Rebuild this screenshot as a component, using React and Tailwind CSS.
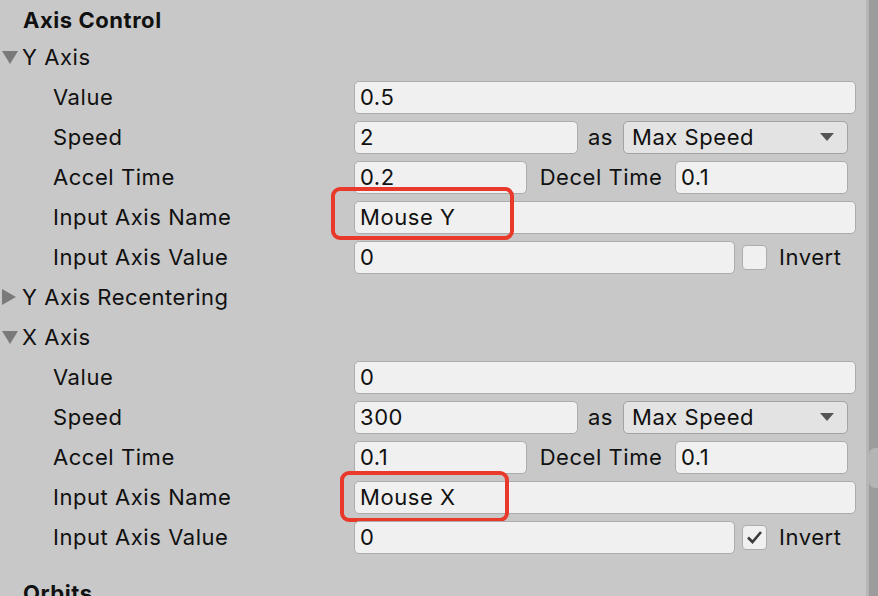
import React from "react";

const font = { fontFamily: "Inter, 'Noto Sans', sans-serif", letterSpacing: "0.55px" };

function Field({ value, className = "", children }) {
  return (
    <div
      className={`relative h-[33px] rounded-[5px] border border-[#acacac] bg-[#f0f0f0] px-[5px] flex items-center text-[22px] text-[#111] ${className}`}
    >
      {value}
      {children}
    </div>
  );
}

function Highlight({ className }) {
  return (
    <div
      className={`absolute rounded-[9px] border-[4px] border-[#e8392b] pointer-events-none ${className}`}
    />
  );
}

function Row({ label, children }) {
  return (
    <div className="h-[40px] flex items-center">
      <div className="w-[354px] pl-[53px] text-[22px] text-[#111] shrink-0">{label}</div>
      <div className="flex items-center flex-1">{children}</div>
    </div>
  );
}

function Foldout({ label, open }) {
  return (
    <div className="h-[40px] flex items-center">
      <div className="w-[22px] pl-[2px] flex items-center shrink-0">
        {open ? (
          <svg width="16" height="14" viewBox="0 0 16 14">
            <path d="M0 1 L16 1 L8 14 Z" fill="#7a7a7a" />
          </svg>
        ) : (
          <svg width="14" height="16" viewBox="0 0 14 16">
            <path d="M0 0 L14 8 L0 16 Z" fill="#7a7a7a" />
          </svg>
        )}
      </div>
      <div className="text-[22px] text-[#111]">{label}</div>
    </div>
  );
}

function Dropdown({ value }) {
  return (
    <div className="h-[33px] w-[225px] rounded-[5px] border border-[#a3a3a3] bg-[#e3e3e3] px-[8px] flex items-center justify-between text-[22px] text-[#111]">
      <span>{value}</span>
      <svg width="16" height="10" viewBox="0 0 16 10" className="mr-[4px]">
        <path d="M1 1 L15 1 L8 9 Z" fill="#555" />
      </svg>
    </div>
  );
}

function Checkbox({ checked }) {
  return (
    <div className="w-[25px] h-[25px] rounded-[4px] border border-[#acacac] bg-[#f0f0f0] flex items-center justify-center">
      {checked ? (
        <svg width="17" height="14" viewBox="0 0 17 14">
          <path d="M2 7.5 L6.5 12 L15 2" fill="none" stroke="#3a3a3a" strokeWidth="2.6" />
        </svg>
      ) : null}
    </div>
  );
}

function AxisBlock({ name, value, speed, accel, inputName, checked, boxClass }) {
  return (
    <>
      <Foldout label={name} open />
      <Row label="Value">
        <Field value={value} className="w-[502px]" />
      </Row>
      <Row label="Speed">
        <Field value={speed} className="w-[224px]" />
        <span className="w-[45px] text-center text-[22px] text-[#111]">as</span>
        <Dropdown value="Max Speed" />
      </Row>
      <Row label="Accel Time">
        <Field value={accel} className="w-[173px]" />
        <span className="w-[148px] text-center text-[22px] text-[#111]">Decel Time</span>
        <Field value="0.1" className="w-[173px]" />
      </Row>
      <Row label="Input Axis Name">
        <Field value={inputName} className="w-[502px]">
          <Highlight className={boxClass} />
        </Field>
      </Row>
      <Row label="Input Axis Value">
        <Field value="0" className="w-[381px]" />
        <div className="ml-[7px]">
          <Checkbox checked={checked} />
        </div>
        <span className="ml-[12px] text-[22px] text-[#111]">Invert</span>
      </Row>
    </>
  );
}

export default function App() {
  return (
    <div className="w-[878px] h-[596px] overflow-hidden bg-[#c8c8c8] flex" style={font}>
      <div className="w-[866px] shrink-0">
        <div className="h-[37px] pt-[3px] pl-[23px] flex items-center text-[22px] font-bold text-[#111]">
          Axis Control
        </div>
        <AxisBlock
          name="Y Axis"
          value="0.5"
          speed="2"
          accel="0.2"
          inputName="Mouse Y"
          checked={false}
          boxClass="left-[-24px] top-[-15px] w-[183px] h-[53px]"
        />
        <Foldout label="Y Axis Recentering" />
        <AxisBlock
          name="X Axis"
          value="0"
          speed="300"
          accel="0.1"
          inputName="Mouse X"
          checked
          boxClass="left-[-15px] top-[-11px] w-[169px] h-[51px]"
        />
        <div className="mt-[16px] h-[40px] pl-[23px] flex items-center text-[22px] font-bold text-[#111]">
          Orbits
        </div>
      </div>
      <div className="w-[3px] bg-[#b6b6b6]" />
      <div className="flex-1 bg-[#9c9c9c] flex flex-col">
        <div className="h-[448px]" />
        <div className="h-[40px] rounded-l-[6px] bg-[#b4b4b4]" />
      </div>
    </div>
  );
}
